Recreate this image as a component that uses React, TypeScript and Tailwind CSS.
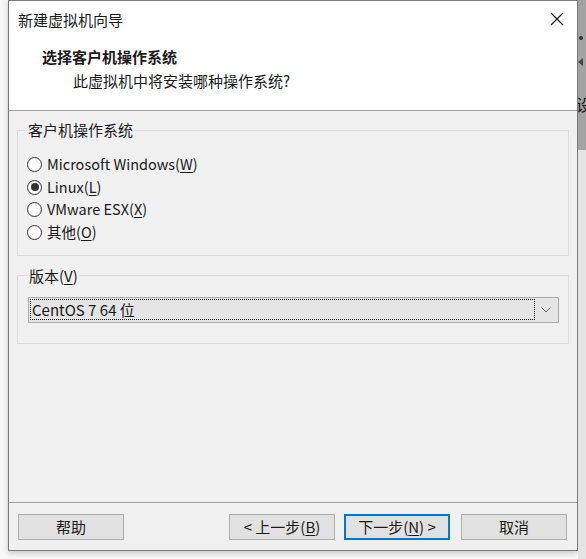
import React from "react";

const FONT = { fontFamily: '"Noto Sans CJK SC", "Noto Sans", sans-serif' };

const OPTIONS = [
  { label: "Microsoft Windows", key: "W" },
  { label: "Linux", key: "L", checked: true },
  { label: "VMware ESX", key: "X" },
  { label: "其他", key: "O" },
];

function Radio({ checked }: { checked?: boolean }) {
  return (
    <span className="flex h-[15px] w-[15px] items-center justify-center rounded-full border border-[#333333] bg-white">
      {checked && <span className="h-[8px] w-[8px] rounded-full bg-[#333333]" />}
    </span>
  );
}

function Btn({ children, primary }: { children: React.ReactNode; primary?: boolean }) {
  return (
    <button
      type="button"
      className={
        primary
          ? "flex h-[26px] w-[106px] items-center justify-center border-2 border-[#0078d7] bg-[#e1e1e1] text-[15px] text-[#1a1a1a]"
          : "flex h-[26px] w-[106px] items-center justify-center border border-[#adadad] bg-[#e1e1e1] text-[15px] text-[#1a1a1a]"
      }
    >
      {children}
    </button>
  );
}

export default function App() {
  return (
    <div className="flex h-[559px] w-[586px] overflow-hidden bg-[#f7f7f7] text-[#1a1a1a]" style={FONT}>
      <div className="w-[8px] shrink-0" />

      {/* dialog window */}
      <div className="flex h-[551px] w-[570px] shrink-0 flex-col border-x border-b border-t border-[#7a7a7a] bg-[#f0f0f0] shadow-[0_2px_6px_rgba(0,0,0,0.2)]">
        {/* title bar */}
        <div className="flex h-[37px] items-center justify-between bg-white pl-[9px] pr-[13px]">
          <span className="text-[15px] leading-none">新建虚拟机向导</span>
          <svg width="14" height="14" viewBox="0 0 14 14" className="mt-[-2px]">
            <path d="M1 1 L13 13 M13 1 L1 13" stroke="#111" strokeWidth="1.1" fill="none" />
          </svg>
        </div>

        {/* header */}
        <div className="flex h-[73px] flex-col border-b border-[#a0a0a0] bg-white">
          <div className="mt-[9px] pl-[33px] text-[15px] font-bold leading-[20px]">选择客户机操作系统</div>
          <div className="mt-[4px] pl-[64px] text-[15px] leading-[20px]">此虚拟机中将安装哪种操作系统?</div>
        </div>

        {/* guest os group */}
        <fieldset className="mx-[8px] mt-[9px] border border-[#dcdcdc] pb-[11px] pl-[9px] pr-[9px]">
          <legend className="px-[1px] text-[15px] leading-[20px] text-[#1a1a1a]">客户机操作系统</legend>
          <div className="mt-[13px] flex flex-col">
            {OPTIONS.map((o) => (
              <div key={o.key} className="flex h-[22.7px] items-center gap-[5px]">
                <Radio checked={o.checked} />
                <span className="text-[14.5px] leading-none">
                  {o.label}(<span className="underline underline-offset-2">{o.key}</span>)
                </span>
              </div>
            ))}
          </div>
        </fieldset>

        {/* version group */}
        <fieldset className="mx-[8px] mt-[10px] border border-[#dcdcdc] pb-[20px] pl-[10px] pr-[9px]">
          <legend className="px-[1px] text-[15px] leading-[20px]">
            版本(<span className="underline underline-offset-2">V</span>)
          </legend>
          <div className="mt-[11px] flex h-[26px] items-center border border-[#acacac] bg-[#e5e5e5] pl-[1px] pr-[1px]">
            <div className="flex h-[21px] flex-1 items-center border border-dotted border-[#111] pl-[1px] text-[15px] leading-none">
              CentOS 7 64 位
            </div>
            <div className="flex w-[22px] items-center justify-center">
              <svg width="10" height="6" viewBox="0 0 10 6">
                <path d="M0.5 0.5 L5 5 L9.5 0.5" stroke="#606060" strokeWidth="1" fill="none" />
              </svg>
            </div>
          </div>
        </fieldset>

        <div className="flex-1" />

        {/* footer */}
        <div className="flex h-[48px] items-start border-t border-[#a0a0a0] pl-[9px] pr-[10px] pt-[11px]">
          <Btn>帮助</Btn>
          <div className="flex-1" />
          <div className="flex gap-[9px]">
            <Btn>
              &lt; 上一步(<span className="underline underline-offset-2">B</span>)
            </Btn>
            <Btn primary>
              下一步(<span className="underline underline-offset-2">N</span>) &gt;
            </Btn>
          </div>
          <div className="w-[11px]" />
          <Btn>取消</Btn>
        </div>
      </div>

      {/* desktop behind */}
      <div className="flex flex-1 flex-col">
        <div className="relative h-[150px] overflow-hidden bg-[#a3a3a3]">
          <span className="absolute left-[1px] top-[36px] h-[4px] w-[4px] rounded-full bg-[#333]" />
          <span className="absolute left-[0px] top-[58px] h-[8px] w-[5px] bg-[#444] [clip-path:polygon(100%_0,0_50%,100%_100%)]" />
          <span className="absolute left-[-2px] top-[96px] text-[16px] leading-none text-[#111]">设</span>
        </div>
        <div className="flex-1 bg-[#e4e4e4]" />
      </div>
    </div>
  );
}
